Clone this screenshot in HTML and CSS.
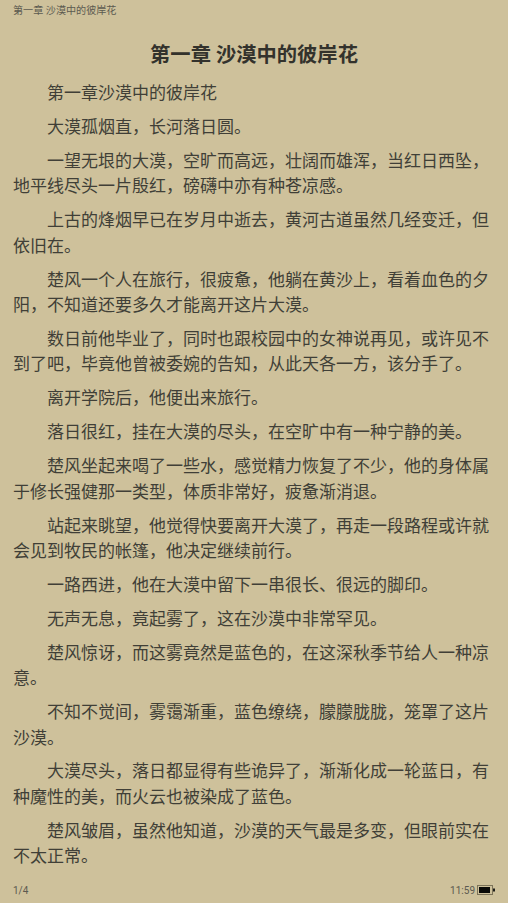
FILE: index.html
```html
<!DOCTYPE html>
<html lang="zh-CN">
<head>
<meta charset="utf-8">
<title>第一章 沙漠中的彼岸花</title>
<link rel="stylesheet" href="styles.css">
</head>
<body>
<div class="page">
  <header class="top">第一章 沙漠中的彼岸花</header>
  <main class="content">
    <h1 class="title">第一章 沙漠中的彼岸花</h1>
    <p>第一章沙漠中的彼岸花</p>
    <p>大漠孤烟直，长河落日圆。</p>
    <p>一望无垠的大漠，空旷而高远，壮阔而雄浑，当红日西坠，地平线尽头一片殷红，磅礴中亦有种苍凉感。</p>
    <p>上古的烽烟早已在岁月中逝去，黄河古道虽然几经变迁，但依旧在。</p>
    <p>楚风一个人在旅行，很疲惫，他躺在黄沙上，看着血色的夕阳，不知道还要多久才能离开这片大漠。</p>
    <p>数日前他毕业了，同时也跟校园中的女神说再见，或许见不到了吧，毕竟他曾被委婉的告知，从此天各一方，该分手了。</p>
    <p>离开学院后，他便出来旅行。</p>
    <p>落日很红，挂在大漠的尽头，在空旷中有一种宁静的美。</p>
    <p>楚风坐起来喝了一些水，感觉精力恢复了不少，他的身体属于修长强健那一类型，体质非常好，疲惫渐消退。</p>
    <p>站起来眺望，他觉得快要离开大漠了，再走一段路程或许就会见到牧民的帐篷，他决定继续前行。</p>
    <p>一路西进，他在大漠中留下一串很长、很远的脚印。</p>
    <p>无声无息，竟起雾了，这在沙漠中非常罕见。</p>
    <p>楚风惊讶，而这雾竟然是蓝色的，在这深秋季节给人一种凉意。</p>
    <p>不知不觉间，雾霭渐重，蓝色缭绕，朦朦胧胧，笼罩了这片沙漠。</p>
    <p>大漠尽头，落日都显得有些诡异了，渐渐化成一轮蓝日，有种魔性的美，而火云也被染成了蓝色。</p>
    <p>楚风皱眉，虽然他知道，沙漠的天气最是多变，但眼前实在不太正常。</p>
  </main>
  <footer class="bottom">
    <span>1/4</span>
    <span class="status">
      <span>11:59</span>
      <svg class="battery" width="18" height="10" viewBox="0 0 18 10" aria-hidden="true">
        <rect x="0.5" y="0.5" width="15" height="9" fill="none" stroke="#7d7459"/>
        <rect x="2" y="2" width="11" height="6" fill="#0a0a08"/>
        <rect x="16" y="3.5" width="2" height="3" fill="#1c1c18"/>
      </svg>
    </span>
  </footer>
</div>
</body>
</html>
```

FILE: styles.css
```css
* { box-sizing: border-box; }
html, body { margin: 0; padding: 0; }
body {
  background: #cec19b;
  font-family: "Roboto", "Noto Sans CJK SC", sans-serif;
  color: #403f37;
}
.page {
  width: 508px;
  height: 903px;
  display: flex;
  flex-direction: column;
  overflow: hidden;
}
.top {
  flex: none;
  height: 20px;
  padding: 4px 13px 0;
  font-size: 10.1px;
  line-height: 14px;
  color: #5c5a50;
}
.content {
  flex: 1;
  padding: 21px 13px 0;
  overflow: hidden;
}
.title {
  margin: 0 0 12px;
  font-size: 20.3px;
  line-height: 28px;
  font-weight: 700;
  text-align: center;
  color: #33322c;
}
.content p {
  margin: 0 0 8.4px;
  font-size: 17px;
  line-height: 25.5px;
  text-indent: 2em;
}
.bottom {
  flex: none;
  height: 26px;
  padding: 0 13px;
  display: flex;
  justify-content: space-between;
  align-items: center;
  font-size: 10px;
  color: #5c5a50;
}
.status {
  display: flex;
  align-items: center;
  gap: 2px;
}
.battery { display: block; }
```
